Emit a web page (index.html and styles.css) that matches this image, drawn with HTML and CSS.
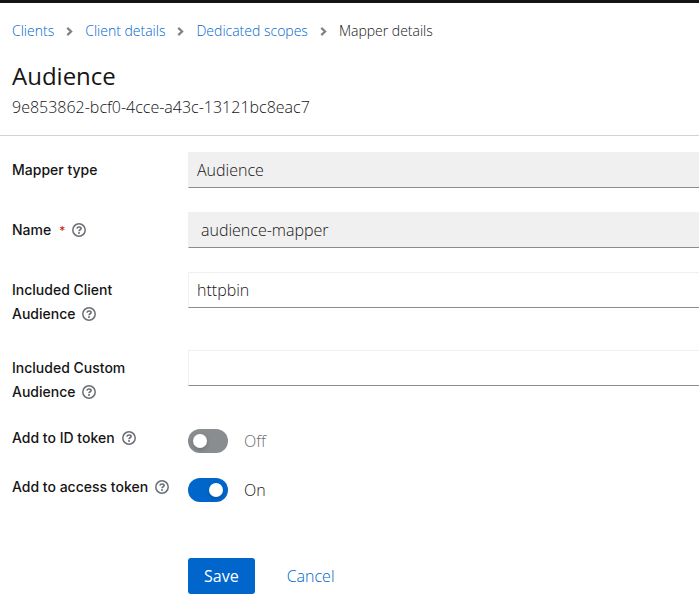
FILE: index.html
```html
<!DOCTYPE html>
<html lang="en">
<head>
<meta charset="utf-8">
<meta name="viewport" content="width=device-width, initial-scale=1">
<title>Mapper details</title>
<link rel="stylesheet" href="styles.css">
</head>
<body>
<svg class="defs" aria-hidden="true">
  <symbol id="help" viewBox="0 0 14 14">
    <circle cx="7" cy="7" r="6.200" fill="none" stroke="currentColor" stroke-width="1.500"/>
    <path d="M4.900 5.600C5.200 4.500 6 4 7 4c1.200 0 2.100.6 2.100 1.600C9.100 6.800 7.100 6.800 7 8.200" fill="none" stroke="currentColor" stroke-width="1.600"/>
    <circle cx="7" cy="10" r="1" fill="currentColor"/>
  </symbol>
  <symbol id="chevron" viewBox="0 0 6 8">
    <path d="M1 .8 4.400 4 1 7.200" fill="none" stroke="currentColor" stroke-width="2"/>
  </symbol>
</svg>
<header class="page-header">
  <nav aria-label="Breadcrumb">
    <ol class="breadcrumb">
      <li><a href="#clients">Clients</a></li>
      <li><svg class="chevron" aria-hidden="true"><use href="#chevron"/></svg><a href="#client">Client details</a></li>
      <li><svg class="chevron" aria-hidden="true"><use href="#chevron"/></svg><a href="#scopes">Dedicated scopes</a></li>
      <li><svg class="chevron" aria-hidden="true"><use href="#chevron"/></svg><span aria-current="page">Mapper details</span></li>
    </ol>
  </nav>
  <h1>Audience</h1>
  <p class="mapper-id">9e853862-bcf0-4cce-a43c-13121bc8eac7</p>
</header>
<main>
  <form class="form">
    <div class="row">
      <div class="label"><label for="type">Mapper type</label></div>
      <input class="field" id="type" type="text" value="Audience" readonly>
    </div>
    <div class="row">
      <div class="label"><label for="name">Name<span class="required" aria-hidden="true">*</span></label><button class="help" type="button" aria-label="Help for name"><svg><use href="#help"/></svg></button></div>
      <input class="field field-name" id="name" type="text" value="audience-mapper" readonly>
    </div>
    <div class="row">
      <div class="label"><label for="client">Included Client Audience</label><button class="help" type="button" aria-label="Help for included client audience"><svg><use href="#help"/></svg></button></div>
      <input class="field" id="client" type="text" value="httpbin">
    </div>
    <div class="row">
      <div class="label"><label for="custom">Included Custom Audience</label><button class="help" type="button" aria-label="Help for included custom audience"><svg><use href="#help"/></svg></button></div>
      <input class="field" id="custom" type="text">
    </div>
    <div class="row row-switch">
      <div class="label"><label for="id-token">Add to ID token</label><button class="help" type="button" aria-label="Help for ID token"><svg><use href="#help"/></svg></button></div>
      <div class="toggle"><input class="switch" id="id-token" type="checkbox" role="switch"><span>Off</span></div>
    </div>
    <div class="row row-switch">
      <div class="label"><label for="access-token">Add to access token</label><button class="help" type="button" aria-label="Help for access token"><svg><use href="#help"/></svg></button></div>
      <div class="toggle"><input class="switch" id="access-token" type="checkbox" role="switch" checked><span>On</span></div>
    </div>
    <div class="actions">
      <button class="save" type="submit">Save</button>
      <a class="cancel" href="#cancel">Cancel</a>
    </div>
  </form>
</main>
</body>
</html>
```
FILE: styles.css
```css
* {
  box-sizing: border-box;
}

body {
  margin: 0;
  border-top: 3px solid #151515;
  background: #fff;
  color: #151515;
  font: 300 16px/24px "Open Sans", "Liberation Sans", sans-serif;
}

a {
  color: #06c;
  text-decoration: none;
}

.defs {
  display: none;
}

.page-header {
  padding: 18px 12px 16px;
  border-bottom: 1px solid #d2d2d2;
}

.breadcrumb {
  display: flex;
  margin: 0;
  padding: 0;
  list-style: none;
  font-size: 14px;
  line-height: 20px;
}

.breadcrumb li {
  display: flex;
  align-items: center;
}

.chevron {
  width: 7px;
  height: 9px;
  margin: 0 12px;
  color: #808386;
}

h1 {
  margin: 19px 0 0;
  font-size: 24px;
  font-weight: 400;
  line-height: 32px;
}

.mapper-id {
  margin: 3px 0 0;
}

.form {
  display: flex;
  flex-direction: column;
  gap: 24px;
  padding: 16px 0 11px 12px;
}

.row {
  display: grid;
  grid-template-columns: 160px 1fr;
  column-gap: 16px;
  align-items: start;
}

.label {
  padding-top: 6px;
  font-family: Inter, "Liberation Sans", sans-serif;
  font-size: 14px;
  font-weight: 500;
}

.required {
  margin-left: 8px;
  color: #c9190b;
  font-size: 12px;
  font-weight: 400;
}

.help {
  width: 14px;
  height: 14px;
  margin-left: 7px;
  padding: 0;
  border: 0;
  background: none;
  color: #6a6e73;
  vertical-align: -2px;
}

.help svg {
  display: block;
  width: 14px;
  height: 14px;
}

.field {
  width: 100%;
  height: 36px;
  padding: 0 8px;
  border: 1px solid #f0f0f0;
  border-right: 0;
  border-bottom-color: #8a8d90;
  border-radius: 0;
  background: #fff;
  color: inherit;
  font: inherit;
}

.field:read-only {
  background: #f0f0f0;
}

.field-name {
  padding-left: 12px;
}

.row-switch {
  height: 25px;
}

.row-switch .label {
  padding: 0;
  line-height: 20px;
  white-space: nowrap;
}

.toggle {
  display: flex;
  align-self: end;
  gap: 16px;
}

.toggle span {
  color: #6a6e73;
}

.switch {
  width: 40px;
  height: 24px;
  margin: 0;
  padding: 5px;
  border-radius: 12px;
  background: #8a8d90;
  appearance: none;
}

.switch::before {
  display: block;
  width: 14px;
  height: 14px;
  border-radius: 50%;
  background: #fff;
  box-shadow: 0 2px 4px rgb(3 3 3 / 20%);
  content: "";
}

.switch:checked {
  background: #06c;
}

.switch:checked::before {
  margin-left: auto;
}

.switch:checked + span {
  color: #151515;
}

.actions {
  display: flex;
  gap: 16px;
  margin: 32px 0 0 176px;
}

.save,
.cancel {
  padding: 6px 16px;
  border: 0;
  border-radius: 3px;
  font: inherit;
}

.save {
  background: #06c;
  color: #fff;
  font-weight: 400;
}
```
